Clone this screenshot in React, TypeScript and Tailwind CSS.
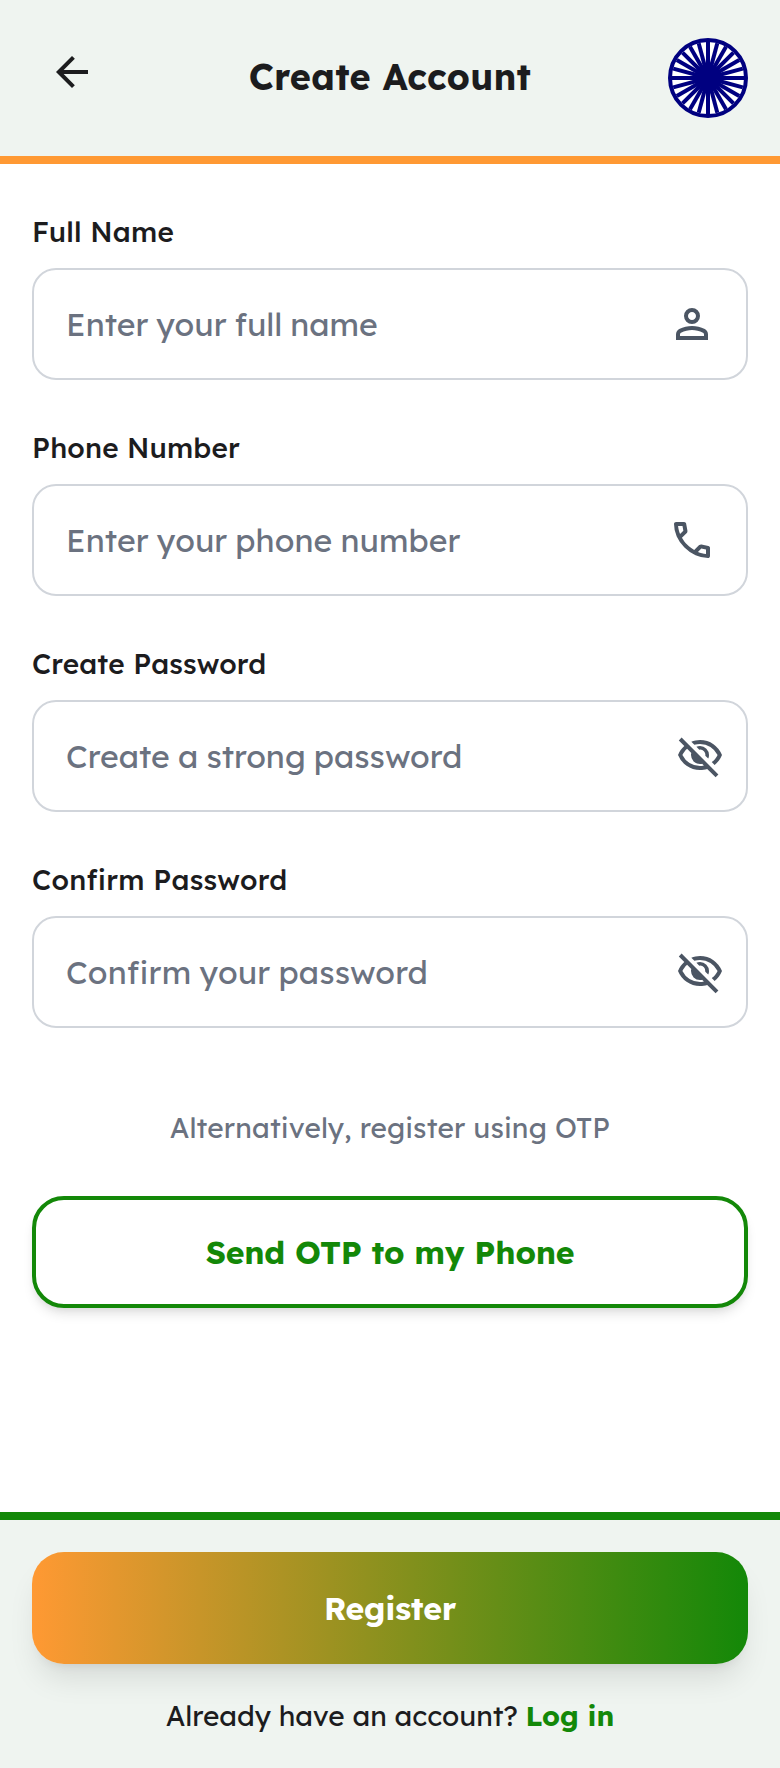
import { useState } from 'react';

const spokes = Array.from({ length: 24 }, (_, i) => i * 15);

const paths = {
  back: 'm313-440 224 224-57 56-320-320 320-320 57 56-224 224h487v80H313Z',
  person:
    'M480-480q-66 0-113-47t-47-113q0-66 47-113t113-47q66 0 113 47t47 113q0 66-47 113t-113 47ZM160-160v-112q0-34 17.5-62.5T224-378q62-31 126-46.5T480-440q66 0 130 15.5T736-378q29 15 46.5 43.5T800-272v112H160Zm80-80h480v-32q0-11-5.5-20T700-306q-54-27-109-40.5T480-360q-56 0-111 13.5T260-306q-9 5-14.5 14t-5.5 20v32Zm240-320q33 0 56.5-23.5T560-640q0-33-23.5-56.5T480-720q-33 0-56.5 23.5T400-640q0 33 23.5 56.5T480-560Z',
  phone:
    'M798-120q-125 0-247-54.5T329-329Q229-429 174.5-551T120-798q0-18 12-30t30-12h162q14 0 25 9.5t13 22.5l26 140q2 16-1 27t-11 19l-97 98q20 37 47.5 71.5T387-386q31 31 65 57.5t72 48.5l94-94q9-9 23.5-13.5T670-390l138 28q14 4 23 14.5t9 23.5v162q0 18-12 30t-30 12ZM241-600l66-66-17-94h-89q5 41 14 81t26 79Zm358 358q39 17 79.5 27t81.5 13v-88l-94-19-67 67Z',
  hidden:
    'm644-428-58-58q9-47-27-88t-93-32l-58-58q17-8 34.5-12t37.5-4q75 0 127.5 52.5T660-500q0 20-4 37.5T644-428Zm128 126-58-56q38-29 67.5-63.5T832-500q-50-101-143.5-160.5T480-720q-29 0-57 4t-55 12l-62-62q41-17 84-25.5t90-8.5q151 0 269 83.5T920-500q-23 59-60.5 109.5T772-302Zm20 246L624-222q-35 11-70.5 16.5T480-200q-151 0-269-83.5T40-500q21-53 53-98.5t73-81.5L56-792l56-56 736 736-56 56ZM222-624q-29 26-53 57t-41 67q50 101 143.5 160.5T480-280q20 0 39-2.5t39-5.5l-36-38q-11 3-21 4.5t-21 1.5q-75 0-127.5-52.5T300-500q0-11 1.5-21t4.5-21l-84-82Z',
};

function Icon({ name }: { name: keyof typeof paths }) {
  return (
    <svg viewBox="0 -960 960 960" fill="currentColor" className="size-12 shrink-0" aria-hidden="true">
      <path d={paths[name]} />
    </svg>
  );
}

function Chakra() {
  return (
    <svg viewBox="0 0 80 80" className="size-20" aria-hidden="true">
      <circle cx="40" cy="40" r="38" fill="#fff" stroke="#000080" strokeWidth="4" />
      {spokes.map((a) => (
        <line key={a} x1="40" y1="40" x2="40" y2="4" stroke="#000080" strokeWidth="4" transform={`rotate(${a} 40 40)`} />
      ))}
    </svg>
  );
}

type FieldProps = {
  id: string;
  label: string;
  placeholder: string;
  spacing: string;
  labelSpacing: string;
  icon: 'person' | 'phone' | 'hidden';
};

function Field({ id, label, placeholder, spacing, labelSpacing, icon }: FieldProps) {
  const [value, setValue] = useState('');
  return (
    <div className="flex flex-col gap-4">
      <label htmlFor={id} className={`text-[28px] leading-10 font-medium ${labelSpacing}`}>
        {label}
      </label>
      <div
        className={`flex h-28 items-center rounded-3xl border-2 border-[#d1d5db] bg-white pl-8 text-[#4b5563] ${icon === 'hidden' ? 'pr-[22px]' : 'pr-[30px]'}`}
      >
        <input
          id={id}
          value={value}
          onChange={(e) => setValue(e.target.value)}
          placeholder={placeholder}
          className={`min-w-0 flex-1 bg-transparent text-[32px] leading-12 text-[#1c1c1e] outline-none placeholder:text-[#6b7280] ${spacing}`}
        />
        <Icon name={icon} />
      </div>
    </div>
  );
}

export default function App() {
  return (
    <div className="flex min-h-[1768px] w-full flex-col bg-white font-['Lexend','Inter',sans-serif] text-[#1c1c1e] [font-feature-settings:'cv11']">
      <header className="flex h-[164px] items-center justify-between border-b-8 border-[#ff9933] bg-[#eff4f0] px-8">
        <button className="flex size-20 items-start justify-center pt-[10px]" aria-label="Back">
          <Icon name="back" />
        </button>
        <h1 className="pb-[3px] text-4xl leading-[45px] font-bold tracking-[0.24px]">Create Account</h1>
        <Chakra />
      </header>
      <main className="flex flex-1 flex-col px-8 pt-12">
        <form className="flex flex-col gap-12">
          <Field id="name" label="Full Name" placeholder="Enter your full name" labelSpacing="tracking-[0.2px]" spacing="[word-spacing:-1.1px]" icon="person" />
          <Field id="phone" label="Phone Number" placeholder="Enter your phone number" labelSpacing="tracking-[0.14px]" spacing="tracking-[0.05px] [word-spacing:-0.9px]" icon="phone" />
          <Field id="password" label="Create Password" placeholder="Create a strong password" labelSpacing="tracking-[0.16px]" spacing="[word-spacing:-0.8px]" icon="hidden" />
          <Field id="confirm" label="Confirm Password" placeholder="Confirm your password" labelSpacing="tracking-[0.28px]" spacing="tracking-[0.14px] [word-spacing:-0.9px]" icon="hidden" />
        </form>
        <p className="mt-20 text-center text-[28px] leading-10 tracking-[0.13px] text-[#6b7280]">
          Alternatively, register using OTP
        </p>
        <button className="mt-12 h-28 rounded-[32px] border-4 border-[#138808] bg-white text-[32px] font-bold tracking-[-0.22px] text-[#138808] shadow-[0_8px_12px_-2px_rgba(0,0,0,0.1),0_4px_8px_-4px_rgba(0,0,0,0.1)]">
          Send OTP to my Phone
        </button>
      </main>
      <footer className="flex h-64 flex-col border-t-8 border-[#138808] bg-[#eff4f0] px-8 pt-8">
        <button className="h-28 shrink-0 rounded-[32px] bg-[linear-gradient(to_right,#ff9933,#138808)] text-[32px] font-bold tracking-[-0.2px] text-white shadow-[0_20px_30px_-6px_rgba(0,0,0,0.1),0_8px_12px_-8px_rgba(0,0,0,0.1)]">
          Register
        </button>
        <p className="mt-8 text-center text-[28px] leading-10 tracking-[-0.04px]">
          Already have an account? <a className="font-bold text-[#138808]">Log in</a>
        </p>
      </footer>
    </div>
  );
}
